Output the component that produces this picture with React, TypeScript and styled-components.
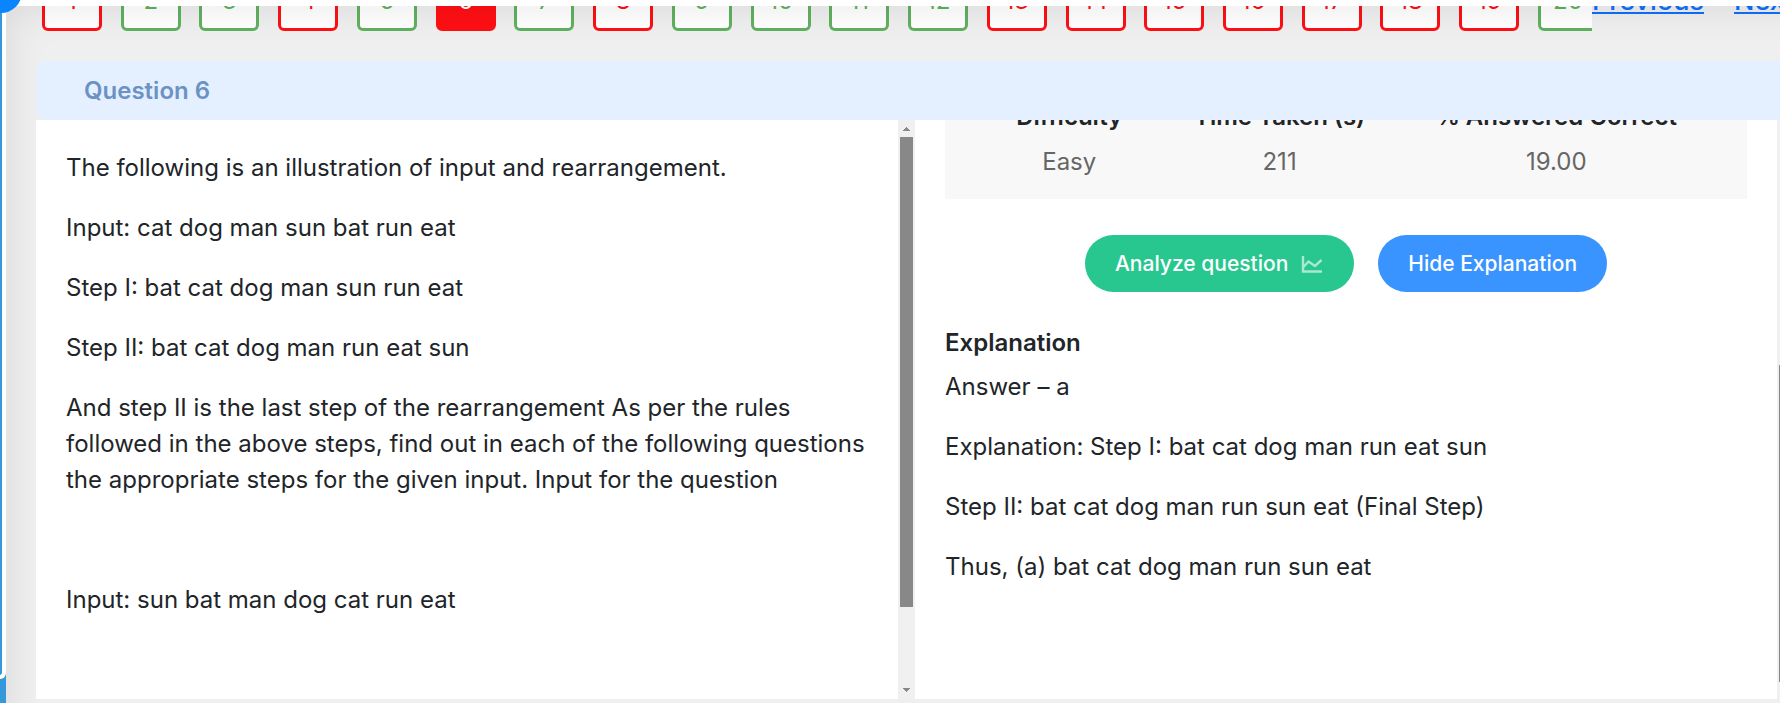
import React from "react";
import styled, { createGlobalStyle } from "styled-components";

const GlobalStyle = createGlobalStyle`
  *, *::before, *::after { box-sizing: border-box; }
  body {
    margin: 0;
    overflow: hidden;
    background: #efefef;
    color: #212529;
    font-family: Inter, "Liberation Sans", sans-serif;
    font-size: 24px;
    line-height: 36px;
  }
`;

const Page = styled.div`
  display: flex;
  height: 100vh;
  padding-top: 6px;
  background: #fff;
  overflow: hidden;
`;

const SideRail = styled.aside`
  flex: 0 0 6px;
  padding-bottom: 24px;
  background: #3498db;
`;

const RailCard = styled.div`
  height: 100%;
  border: 4px solid #fff;
  border-width: 0 4px 4px 0;
  border-radius: 0 0 6px 0;
`;

const FloatingBadge = styled.div`
  position: absolute;
  z-index: 2;
  top: -29px;
  left: -20px;
  width: 42px;
  height: 42px;
  border-radius: 50%;
  background: #0a84ff;
`;

const Main = styled.main`
  position: relative;
  flex: 1;
  min-width: 0;
  display: flex;
  flex-direction: column;
  padding: 0 0 4px 30px;
  background: #efefef;
  overflow: hidden;

  &::after {
    content: "";
    position: absolute;
    inset: 0 -60px -60px 0;
    box-shadow: inset 0 0 40px rgba(0, 0, 0, 0.1);
    pointer-events: none;
  }
`;

const NavBar = styled.nav`
  display: flex;
  align-items: flex-end;
  height: 25px;
  margin-bottom: 30px;
  overflow: hidden;
`;

const QuestionStrip = styled.div`
  flex: 1;
  min-width: 0;
  padding-left: 6px;
  overflow: hidden;
  display: flex;
`;

const QuestionList = styled.div`
  flex: 1 0 auto;
  display: flex;
  justify-content: space-between;
  margin-right: -6px;
`;

const QuestionButton = styled.button<{ $correct: boolean; $current: boolean }>`
  width: 60px;
  height: 60px;
  padding: 0;
  border: 3px solid ${(p) => (p.$correct ? "#5fb15f" : "#ff0f14")};
  border-radius: 6px;
  background: ${(p) => (p.$current ? "#ff0f14" : "#fff")};
  color: ${(p) => (p.$current ? "#fff" : p.$correct ? "#5fb15f" : "#ff0f14")};
  font: inherit;
`;

const PagerLinks = styled.div`
  display: flex;
  flex: 0 0 188px;
  min-width: 0;
  gap: 30px;
  height: 48px;
`;

const PagerLink = styled.a`
  color: #0d6efd;
  font-size: 27px;
  font-weight: 500;
  white-space: nowrap;
`;

const Workspace = styled.section`
  position: relative;
  z-index: 1;
  flex: 1;
  min-height: 0;
  display: flex;
  flex-direction: column;
  margin-right: -14px;
`;

const QuestionHeader = styled.h2`
  margin: 0;
  padding: 12px 48px 11px;
  border-radius: 12px;
  background: #e4f0ff;
  color: #6c92c3;
  font-size: 24px;
  font-weight: 600;
`;

const Panes = styled.div`
  flex: 1;
  min-height: 0;
  display: flex;
`;

const Pane = styled.div`
  flex: 1 1 0;
  min-width: 0;
  display: flex;
  background: #fff;
`;

const PaneBody = styled.div`
  flex: 1;
  min-width: 0;
  padding: 0 30px;
  overflow: hidden;
`;

const QuestionText = styled.div`
  padding-top: 30px;
`;

const Paragraph = styled.p`
  min-height: 36px;
  margin: 0 0 24px;
`;

const ScrollTrack = styled.div`
  flex: 0 0 17px;
  display: flex;
  flex-direction: column;
  align-items: center;
  justify-content: space-between;
  background: #f0f0f0;
`;

const ScrollArrow = styled.svg`
  flex: 0 0 17px;
  width: 17px;
  height: 17px;
  fill: #888;
`;

const ScrollRange = styled.div`
  flex: 1;
  display: flex;
  flex-direction: column;
`;

const ScrollSpace = styled.div<{ $share: number }>`
  flex: ${(p) => p.$share} 1 0;
`;

const ScrollThumb = styled(ScrollSpace)`
  width: 13px;
  background: #888;
`;

const Stats = styled.div`
  margin-top: -26px;
  padding: 0 32px 15px;
  background: #f8f8f8;
`;

const StatsTable = styled.table`
  width: 100%;
  table-layout: fixed;
  border-collapse: collapse;
  text-align: center;
  white-space: nowrap;
`;

const StatHead = styled.th<{ $width: number }>`
  width: ${(p) => p.$width}%;
  height: 45px;
  padding: 0;
  font-weight: 600;
`;

const StatCell = styled.td`
  height: 45px;
  padding: 0;
  color: #666;
`;

const Actions = styled.div`
  display: flex;
  justify-content: center;
  gap: 24px;
  margin: 36px 0 33px;
`;

const PillButton = styled.button<{ $color: string }>`
  display: flex;
  align-items: center;
  gap: 12px;
  height: 57px;
  padding: 0 30px;
  border: 0;
  border-radius: 29px;
  background: ${(p) => p.$color};
  color: #fff;
  font: inherit;
  font-size: 21px;
  font-weight: 500;
  white-space: nowrap;
`;

const ChartIcon = styled.svg`
  width: 24px;
  height: 20px;
  opacity: 0.6;
`;

const ExplanationTitle = styled.h3`
  margin: 0 0 8px;
  font-size: 24px;
  font-weight: 600;
`;

const correctQuestions = [2, 3, 5, 7, 9, 10, 11, 12, 20];
const questions = Array.from({ length: 20 }, (_, i) => i + 1);
const currentQuestion = 6;

const questionText = [
  "The following is an illustration of input and rearrangement.",
  "Input: cat dog man sun bat run eat",
  "Step I: bat cat dog man sun run eat",
  "Step II: bat cat dog man run eat sun",
  "And step II is the last step of the rearrangement As per the rules followed in the above steps, find out in each of the following questions the appropriate steps for the given input. Input for the question",
  "",
  "Input: sun bat man dog cat run eat",
];

const explanation = [
  "Answer – a",
  "Explanation: Step I: bat cat dog man run eat sun",
  "Step II: bat cat dog man run sun eat (Final Step)",
  "Thus, (a) bat cat dog man run sun eat",
];

function Scrollbar({ before, thumb, after }: { before: number; thumb: number; after: number }) {
  return (
    <ScrollTrack aria-hidden="true">
      <ScrollArrow viewBox="0 0 17 17">
        <path d="M5 11h7v-1h-1v-1h-1v-1h-1v-1h-1v1h-1v1h-1v1h-1z" />
      </ScrollArrow>
      <ScrollRange>
        <ScrollSpace $share={before} />
        <ScrollThumb $share={thumb} />
        <ScrollSpace $share={after} />
      </ScrollRange>
      <ScrollArrow viewBox="0 0 17 17">
        <path d="M5 6h7v1h-1v1h-1v1h-1v1h-1v-1h-1v-1h-1v-1h-1z" />
      </ScrollArrow>
    </ScrollTrack>
  );
}

export default function App() {
  return (
    <>
      <GlobalStyle />
      <Page>
        <SideRail>
          <RailCard />
        </SideRail>
        <FloatingBadge />
        <Main>
          <NavBar aria-label="Questions">
            <QuestionStrip>
              <QuestionList>
                {questions.map((n) => (
                  <QuestionButton
                    key={n}
                    type="button"
                    $correct={correctQuestions.includes(n)}
                    $current={n === currentQuestion}
                  >
                    {n}
                  </QuestionButton>
                ))}
              </QuestionList>
            </QuestionStrip>
            <PagerLinks>
              <PagerLink href="#previous">Previous</PagerLink>
              <PagerLink href="#next">Next</PagerLink>
            </PagerLinks>
          </NavBar>
          <Workspace>
            <QuestionHeader>Question 6</QuestionHeader>
            <Panes>
              <Pane>
                <PaneBody>
                  <QuestionText>
                    {questionText.map((text, i) => (
                      <Paragraph key={i}>{text}</Paragraph>
                    ))}
                  </QuestionText>
                </PaneBody>
                <Scrollbar before={0} thumb={470} after={75} />
              </Pane>
              <Pane>
                <PaneBody>
                  <Stats>
                    <StatsTable>
                      <thead>
                        <tr>
                          <StatHead $width={25}>Difficulty</StatHead>
                          <StatHead $width={32}>Time Taken (s)</StatHead>
                          <StatHead $width={43}>% Answered Correct</StatHead>
                        </tr>
                      </thead>
                      <tbody>
                        <tr>
                          <StatCell>Easy</StatCell>
                          <StatCell>211</StatCell>
                          <StatCell>19.00</StatCell>
                        </tr>
                      </tbody>
                    </StatsTable>
                  </Stats>
                  <Actions>
                    <PillButton type="button" $color="#28c78f">
                      Analyze question
                      <ChartIcon viewBox="0 0 24 20" fill="none" stroke="#fff" aria-hidden="true">
                        <path
                          d="M3 2v15.5h19M3.5 13l5-5.500 6.500 4.500 6.500-6"
                          strokeWidth="2.4"
                        />
                      </ChartIcon>
                    </PillButton>
                    <PillButton type="button" $color="#3a94ff">
                      Hide Explanation
                    </PillButton>
                  </Actions>
                  <ExplanationTitle>Explanation</ExplanationTitle>
                  {explanation.map((text) => (
                    <Paragraph key={text}>{text}</Paragraph>
                  ))}
                </PaneBody>
                <Scrollbar before={228} thumb={317} after={0} />
              </Pane>
            </Panes>
          </Workspace>
        </Main>
      </Page>
    </>
  );
}
